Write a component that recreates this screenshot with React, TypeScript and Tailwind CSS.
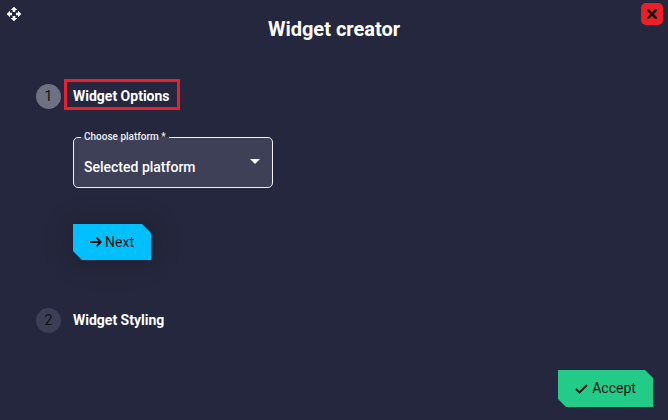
import React from "react";

export default function App() {
  return (
    <div className="relative w-[668px] h-[420px] overflow-hidden bg-[#25273e] text-white font-['Roboto',sans-serif]">
      {/* move handle */}
      <svg className="absolute left-[6px] top-[6px]" width="16" height="16" viewBox="0 0 24 24" fill="#ffffff">
        <path d="M10 9h4V6h3l-5-5-5 5h3v3zm-1 1H6V7l-5 5 5 5v-3h3v-4zm14 2l-5-5v3h-3v4h3v3l5-5zm-9 3h-4v3H7l5 5 5-5h-3v-3z" />
      </svg>
      {/* close */}
      <button className="absolute left-[641px] top-[3px] w-[22px] h-[22px] rounded-[5px] bg-[#ec1f27] flex items-center justify-center">
        <svg width="10" height="10" viewBox="0 0 10 10" stroke="#111" strokeWidth="2.6" strokeLinecap="square">
          <path d="M1 1L9 9M9 1L1 9" />
        </svg>
      </button>

      <div className="h-[58px] flex items-center justify-center">
        <h1 className="text-[20px] font-bold leading-none">Widget creator</h1>
      </div>

      {/* step 1 */}
      <div className="mt-[26px] h-[25px] flex items-center pl-[36px]">
        <div className="w-[25px] h-[25px] rounded-full bg-[#6e7084] flex items-center justify-center text-[14px] text-[#111]">1</div>
        <span className="relative ml-[12px] text-[14px] font-bold leading-[25px]">
          Widget Options
          <span className="absolute left-[-9px] right-[-10px] top-[-5px] bottom-[-1px] border-[3px] border-[#e8202a]"></span>
        </span>
      </div>

      <div className="pl-[73px]">
        {/* select */}
        <div className="relative mt-[28px] w-[200px] h-[51px] rounded-[5px] border border-[#f2f2f2] bg-[#3e4057] flex items-center pl-[10px] pt-[9px]">
          <span className="absolute left-[7px] top-[-7px] px-[3px] text-[10px] leading-[12px] font-medium text-[#ececec] bg-[linear-gradient(to_bottom,#25273e_50%,#3e4057_50%)]">
            Choose platform *
          </span>
          <span className="text-[14px] font-medium">Selected platform</span>
          <span className="absolute left-[176px] top-[21px] w-0 h-0 border-l-[5px] border-r-[5px] border-t-[5px] border-l-transparent border-r-transparent border-t-white"></span>
        </div>

        {/* next */}
        <div className="mt-[36px] w-[78px] h-[36px] shadow-[0_0_22px_10px_rgba(0,0,0,0.12)] rounded-[10px]">
          <button className="w-[78px] h-[36px] bg-[#00c0ff] text-[#111] text-[14px] flex items-center justify-center gap-[3px] [clip-path:polygon(0_0,calc(100%-9px)_0,100%_9px,100%_100%,9px_100%,0_calc(100%-9px))]">
            <svg width="12" height="10" viewBox="0 0 12 10" fill="none" stroke="#111" strokeWidth="1.8">
              <path d="M0 5H11M6.5 0.7L10.8 5L6.5 9.3" />
            </svg>
            <span>Next</span>
          </button>
        </div>
      </div>

      {/* step 2 */}
      <div className="mt-[48px] h-[25px] flex items-center pl-[36px]">
        <div className="w-[25px] h-[25px] rounded-full bg-[#3b3e55] flex items-center justify-center text-[14px] text-[#111]">2</div>
        <span className="ml-[12px] text-[14px] font-bold leading-[25px]">Widget Styling</span>
      </div>

      {/* accept */}
      <div className="absolute right-[15px] bottom-[13px]">
        <button className="w-[95px] h-[37px] bg-[#22cc88] text-[#111] text-[14px] flex items-center justify-center gap-[4px] [clip-path:polygon(0_0,calc(100%-8px)_0,100%_8px,100%_100%,8px_100%,0_calc(100%-8px))]">
          <svg width="13" height="10" viewBox="0 0 13 10" fill="none" stroke="#111" strokeWidth="1.8">
            <path d="M1 5L4.5 8.5L12 1" />
          </svg>
          <span>Accept</span>
        </button>
      </div>
    </div>
  );
}
